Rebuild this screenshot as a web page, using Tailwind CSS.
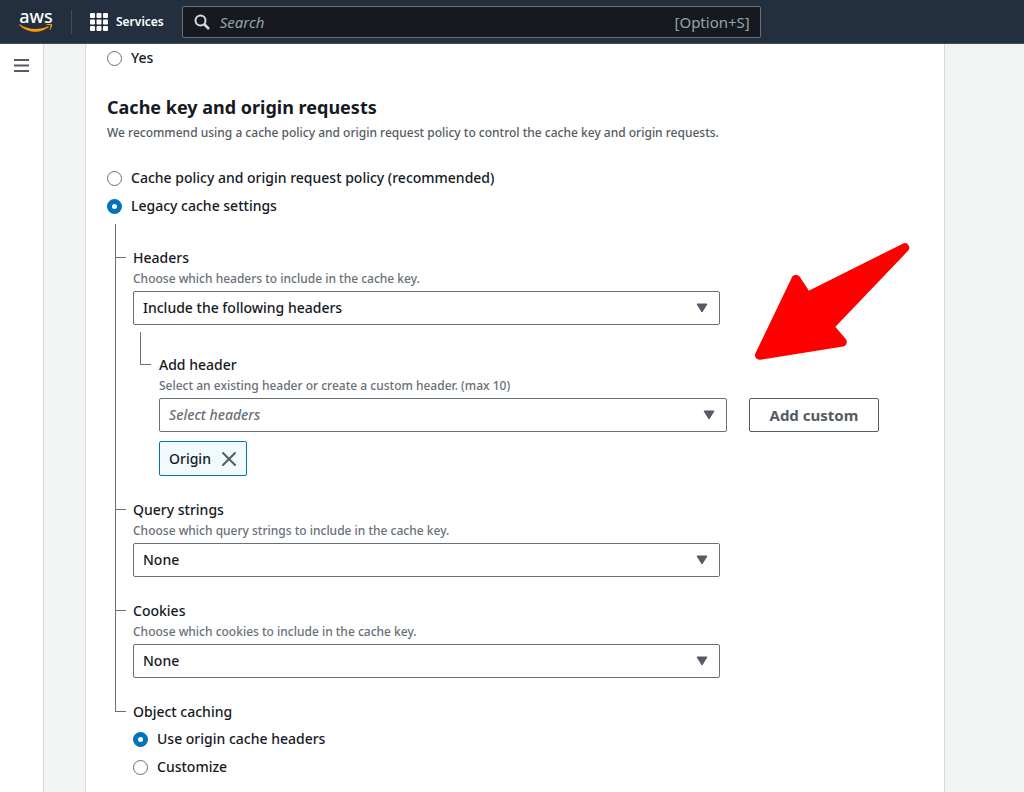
<!DOCTYPE html>
<html lang="en">
<head>
    <meta charset="UTF-8">
    <meta name="viewport" content="width=device-width, initial-scale=1.0">
    <title>Create behavior | CloudFront</title>
    <script src="https://cdn.jsdelivr.net/npm/@tailwindcss/browser@4"></script>
    <style>
        body {
            font-family: 'Noto Sans', 'Open Sans', sans-serif;
        }
    </style>
</head>
<body class="min-h-screen flex flex-col bg-[#f2f3f3] text-[#16191f] text-[14px] leading-5 font-medium overflow-x-hidden">
    <!-- Top navigation -->
    <header class="h-11 shrink-0 flex items-center bg-[#232f3e] border-b border-[#414d5c] pl-[19px] pr-4">
        <a href="#" aria-label="AWS home" class="w-[34px] shrink-0 flex flex-col items-center text-white">
            <span class="text-[18px] leading-[13px] font-medium">aws</span>
            <svg class="w-[34px] h-[9px] mt-px" viewBox="0 0 34 9" fill="#f90" aria-hidden="true">
                <path d="M.2.9c-.3-.4.1-.8.6-.5 4.700 2.800 10 4.500 15.700 4.500 4.100 0 8.500-.9 12.400-2.600.7-.3 1.300.4.600.9C26 5.900 21.200 7.700 16.700 7.700 10.300 7.700 4.400 5.200.2.900z"/>
                <path d="M31.400 1.400c-.5-.6-3-.3-4.200-.1-.4 0-.4-.3-.1-.5 2.100-1.400 5.500-1 5.900-.5.4.5-.1 4-2.100 5.600-.3.300-.6.100-.5-.2.500-1.100 1.500-3.700 1-4.300z"/>
            </svg>
        </a>
        <div class="w-px h-6 bg-[#414d5c] ml-[18px] shrink-0"></div>
        <button type="button" class="ml-[18px] shrink-0 flex items-center gap-2 text-white text-[12px] font-semibold">
            <svg class="w-[18px] h-[18px]" viewBox="0 0 18 18" fill="#fff" aria-hidden="true">
                <rect x="0" y="0" width="5" height="5" rx="1"/>
                <rect x="6.500" y="0" width="5" height="5" rx="1"/>
                <rect x="13" y="0" width="5" height="5" rx="1"/>
                <rect x="0" y="6.500" width="5" height="5" rx="1"/>
                <rect x="6.500" y="6.500" width="5" height="5" rx="1"/>
                <rect x="13" y="6.500" width="5" height="5" rx="1"/>
                <rect x="0" y="13" width="5" height="5" rx="1"/>
                <rect x="6.500" y="13" width="5" height="5" rx="1"/>
                <rect x="13" y="13" width="5" height="5" rx="1"/>
            </svg>
            Services
        </button>
        <label class="ml-[18px] flex-1 max-w-[579px] h-8 flex items-center gap-[10px] px-[10px] rounded-xs border border-[#687078] bg-[#16191f] text-[15px] font-normal text-[#95a5a6]">
            <svg class="w-4 h-4 ml-px shrink-0" viewBox="0 0 16 16" fill="none" stroke="#d5dbdb" stroke-width="2" aria-hidden="true">
                <circle cx="6.500" cy="6.500" r="5"/>
                <path d="M10 10l5 5" stroke-width="2.500"/>
            </svg>
            <input type="text" aria-label="Search" placeholder="Search" class="flex-1 min-w-0 bg-transparent outline-none placeholder:italic placeholder:text-[#95a5a6]">
            <span>[Option+S]</span>
        </label>
    </header>

    <div class="flex-1 flex">
        <!-- Collapsed side navigation -->
        <nav class="w-11 shrink-0 bg-white border-r border-[#d5dbdb]">
            <button type="button" aria-label="Open navigation" class="ml-[14px] mt-[15px] block">
                <svg class="w-[15px] h-[13px]" viewBox="0 0 15 13" stroke="#545b64" stroke-width="2" aria-hidden="true">
                    <path d="M0 1h15M0 6.500h15M0 12h15"/>
                </svg>
            </button>
        </nav>

        <main class="flex-1 pl-[41px] pr-[79px] flex">
            <form class="flex-1 min-w-0 bg-white border-x border-[#d5dbdb] px-[21px]">
                <label class="h-7 flex items-center gap-[9px]">
                    <input type="radio" name="restrict" class="appearance-none w-[15px] h-[15px] rounded-full border border-[#687078] bg-white checked:border-[5px] checked:border-[#0073bb]">
                    Yes
                </label>

                <h2 class="mt-[23px] text-[18px] leading-6 font-bold">Cache key and origin requests</h2>
                <p class="mt-1 text-[12px] text-[#545b64]">We recommend using a cache policy and origin request policy to control the cache key and origin requests.</p>

                <div class="mt-[21px]">
                    <label class="h-7 flex items-center gap-[9px]">
                        <input type="radio" name="policy" class="appearance-none w-[15px] h-[15px] rounded-full border border-[#687078] bg-white checked:border-[5px] checked:border-[#0073bb]">
                        Cache policy and origin request policy (recommended)
                    </label>
                    <label class="h-7 flex items-center gap-[9px]">
                        <input type="radio" name="policy" checked class="appearance-none w-[15px] h-[15px] rounded-full border border-[#687078] bg-white checked:border-[5px] checked:border-[#0073bb]">
                        Legacy cache settings
                    </label>
                </div>

                <!-- Legacy settings tree -->
                <div class="mt-1 ml-2">
                    <div class="flex gap-[7px]">
                        <div class="w-[11px] shrink-0 flex flex-col">
                            <span class="h-[34px] border-l border-b border-[#687078]"></span>
                            <span class="flex-1 border-l border-[#687078]"></span>
                        </div>
                        <div class="flex-1 pt-6 pb-6">
                            <label for="headers" class="block">Headers</label>
                            <p class="mt-px text-[12px] text-[#687078]">Choose which headers to include in the cache key.</p>
                            <div class="mt-[2px] grid grid-cols-4 gap-x-[22px]">
                                <div class="col-span-3 grid items-center">
                                    <select id="headers" class="col-start-1 row-start-1 appearance-none w-full h-[34px] px-[9px] rounded-xs border border-[#687078] bg-white">
                                        <option>Include the following headers</option>
                                        <option>None</option>
                                    </select>
                                    <svg class="col-start-1 row-start-1 justify-self-end mr-3 w-3 h-[10px] pointer-events-none" viewBox="0 0 12 10" fill="#545b64" stroke="#545b64" stroke-linejoin="round" aria-hidden="true"><path d="M1 1h10L6 9z"/></svg>
                                </div>
                            </div>

                            <div class="mt-[7px] ml-[7px] flex gap-2">
                                <div class="w-[11px] h-[33px] shrink-0 border-l border-b border-[#687078]"></div>
                                <div class="flex-1 pt-[23px]">
                                    <label for="add-header" class="block">Add header</label>
                                    <p class="mt-px text-[12px] text-[#687078]">Select an existing header or create a custom header. (max 10)</p>
                                    <div class="mt-[2px] grid grid-cols-4 gap-x-[22px]">
                                        <div class="col-span-3 grid items-center">
                                            <select id="add-header" class="col-start-1 row-start-1 appearance-none w-full h-[34px] px-[9px] rounded-xs border border-[#687078] bg-white italic text-[#687078]">
                                                <option>Select headers</option>
                                                <option>Origin</option>
                                            </select>
                                            <svg class="col-start-1 row-start-1 justify-self-end mr-3 w-3 h-[10px] pointer-events-none" viewBox="0 0 12 10" fill="#545b64" stroke="#545b64" stroke-linejoin="round" aria-hidden="true"><path d="M1 1h10L6 9z"/></svg>
                                        </div>
                                        <button type="button" class="justify-self-start h-[34px] px-5 rounded-xs border border-[#545b64] bg-white text-[15px] text-[#545b64] font-bold whitespace-nowrap">Add custom</button>
                                    </div>
                                    <div class="mt-[9px] w-fit h-[35px] flex items-center gap-[10px] px-[9px] rounded-xs border border-[#0073bb] bg-[#f1faff]">
                                        Origin
                                        <button type="button" aria-label="Remove Origin">
                                            <svg class="w-4 h-4" viewBox="0 0 16 16" fill="none" stroke="#545b64" stroke-width="2" stroke-linecap="round" aria-hidden="true"><path d="M2 2l12 12M14 2L2 14"/></svg>
                                        </button>
                                    </div>
                                </div>
                            </div>
                        </div>
                    </div>

                    <div class="flex gap-[7px]">
                        <div class="w-[11px] shrink-0 flex flex-col">
                            <span class="h-[10px] border-l border-b border-[#687078]"></span>
                            <span class="flex-1 border-l border-[#687078]"></span>
                        </div>
                        <div class="flex-1 pb-6">
                            <label for="query-strings" class="block">Query strings</label>
                            <p class="mt-px text-[12px] text-[#687078]">Choose which query strings to include in the cache key.</p>
                            <div class="mt-[2px] grid grid-cols-4 gap-x-[22px]">
                                <div class="col-span-3 grid items-center">
                                    <select id="query-strings" class="col-start-1 row-start-1 appearance-none w-full h-[34px] px-[9px] rounded-xs border border-[#687078] bg-white">
                                        <option>None</option>
                                        <option>All</option>
                                    </select>
                                    <svg class="col-start-1 row-start-1 justify-self-end mr-3 w-3 h-[10px] pointer-events-none" viewBox="0 0 12 10" fill="#545b64" stroke="#545b64" stroke-linejoin="round" aria-hidden="true"><path d="M1 1h10L6 9z"/></svg>
                                </div>
                            </div>
                        </div>
                    </div>

                    <div class="flex gap-[7px]">
                        <div class="w-[11px] shrink-0 flex flex-col">
                            <span class="h-[10px] border-l border-b border-[#687078]"></span>
                            <span class="flex-1 border-l border-[#687078]"></span>
                        </div>
                        <div class="flex-1 pb-6">
                            <label for="cookies" class="block">Cookies</label>
                            <p class="mt-px text-[12px] text-[#687078]">Choose which cookies to include in the cache key.</p>
                            <div class="mt-[2px] grid grid-cols-4 gap-x-[22px]">
                                <div class="col-span-3 grid items-center">
                                    <select id="cookies" class="col-start-1 row-start-1 appearance-none w-full h-[34px] px-[9px] rounded-xs border border-[#687078] bg-white">
                                        <option>None</option>
                                        <option>All</option>
                                    </select>
                                    <svg class="col-start-1 row-start-1 justify-self-end mr-3 w-3 h-[10px] pointer-events-none" viewBox="0 0 12 10" fill="#545b64" stroke="#545b64" stroke-linejoin="round" aria-hidden="true"><path d="M1 1h10L6 9z"/></svg>
                                </div>
                            </div>
                        </div>
                    </div>

                    <div class="flex gap-[7px]">
                        <div class="w-[11px] h-[10px] shrink-0 border-l border-b border-[#687078]"></div>
                        <fieldset class="flex-1">
                            <legend>Object caching</legend>
                            <div class="mt-[3px]">
                                <label class="h-7 flex items-center gap-[9px]">
                                    <input type="radio" name="caching" checked class="appearance-none w-[15px] h-[15px] rounded-full border border-[#687078] bg-white checked:border-[5px] checked:border-[#0073bb]">
                                    Use origin cache headers
                                </label>
                                <label class="h-7 flex items-center gap-[9px]">
                                    <input type="radio" name="caching" class="appearance-none w-[15px] h-[15px] rounded-full border border-[#687078] bg-white checked:border-[5px] checked:border-[#0073bb]">
                                    Customize
                                </label>
                            </div>
                        </fieldset>
                    </div>
                </div>
            </form>
        </main>
    </div>

    <!-- Arrow pointing at the custom header button -->
    <svg class="absolute top-[240px] left-[750px] w-[164px] h-[124px] pointer-events-none" viewBox="750 240 164 124" fill="#f00" stroke="#f00" stroke-width="9" stroke-linejoin="round" aria-hidden="true">
        <path d="M904.800 247.700L807.300 296.500 796 279.300 759.500 355.300 842.300 342 829.300 326.700z"/>
    </svg>
</body>
</html>
